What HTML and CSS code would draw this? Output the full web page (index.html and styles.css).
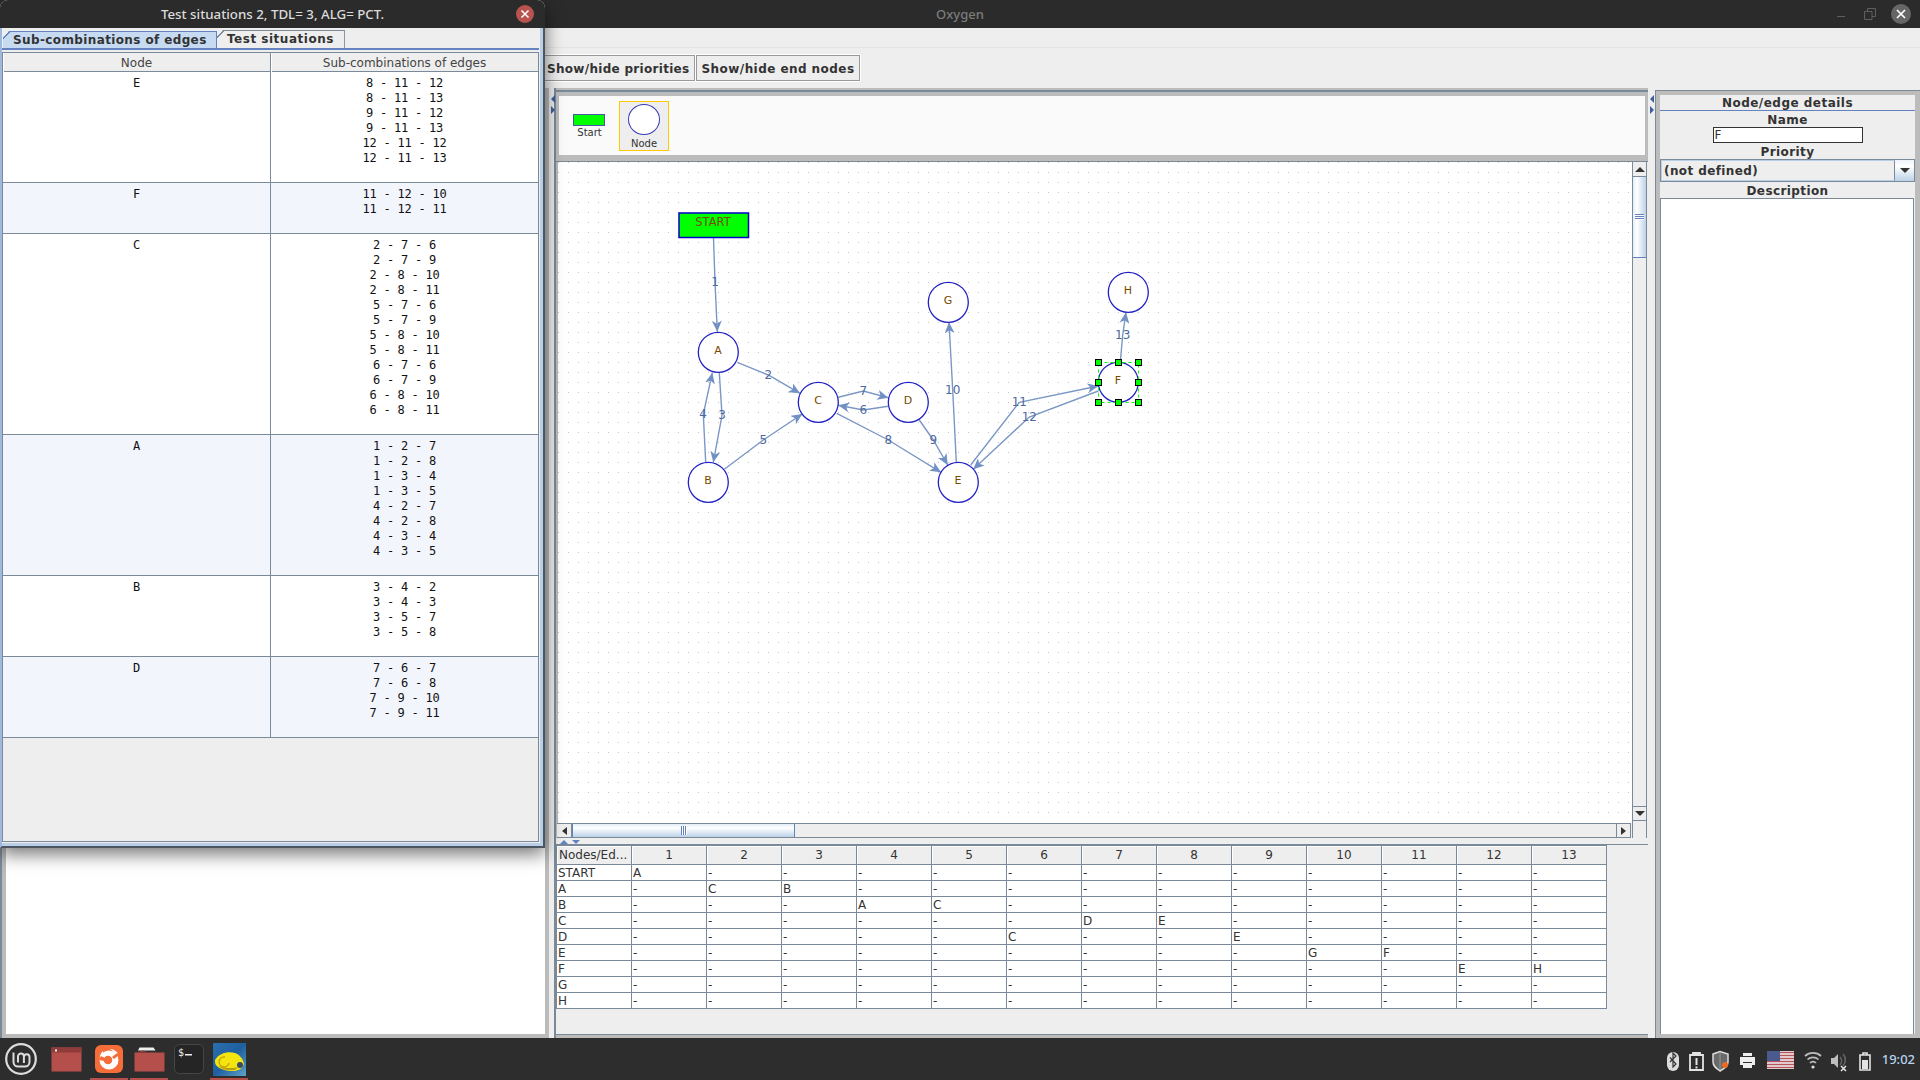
FILE: index.html
```html
<!DOCTYPE html>
<html lang="en">
<head>
<meta charset="utf-8">
<title>Oxygen</title>
<link rel="stylesheet" href="styles.css">
</head>
<body>
<div class="desktop">
  <header class="app-title">
    <span class="app-name">Oxygen</span>
    <div class="win-controls">
      <svg class="win-min" width="10" height="10" viewBox="0 0 10 10"><path d="M1 7.5h8" stroke="#5f5f5f" stroke-width="1"/></svg>
      <svg class="win-max" width="12" height="12" viewBox="0 0 12 12"><path d="M.5 3.5h7.500v8h-7.500zM3.500 3.500v-3h8v8h-3.500" fill="none" stroke="#5f5f5f"/></svg>
      <span class="win-close"><svg width="10" height="10" viewBox="0 0 10 10"><path d="M1 1l8 8M9 1l-8 8" stroke="#fff" stroke-width="1.700"/></svg></span>
    </div>
  </header>

  <div class="toolbar">
    <button class="tool-btn tool-first">Show/hide priorities</button>
    <button class="tool-btn tool-second">Show/hide end nodes</button>
  </div>

  <main class="workspace">
    <section class="left-pane"><div class="left-white"></div></section>
    <div class="split-left"><i class="arrow-l"></i><i class="arrow-r"></i></div>

    <section class="center-pane">
      <div class="palette-frame">
        <div class="palette">
          <div class="pal-start"><span class="pal-swatch"></span><span class="pal-label">Start</span></div>
          <div class="pal-node"><span class="pal-circle"></span><span class="pal-label">Node</span></div>
        </div>
      </div>

      <div class="canvas-row">
        <div class="canvas-col">
          <div class="canvas">
            <svg class="graph" width="1074" height="660" viewBox="558 162 1074 660">
              <defs>
                <pattern id="dots" x="558" y="162" width="10" height="10" patternUnits="userSpaceOnUse"><rect width="1" height="1" fill="#c6c6c6"/></pattern>
                <marker id="arrow" markerUnits="userSpaceOnUse" markerWidth="12" markerHeight="10" refX="11" refY="5" orient="auto"><path d="M0 0L11 5L0 10L3 5z" fill="#7191c4"/></marker>
              </defs>
              <rect x="558" y="162" width="1074" height="660" fill="url(#dots)"/>
              <g class="edges">
                <polyline points="713.500,238 715,282 717.300,331.700" marker-end="url(#arrow)"/>
                <polyline points="737.300,362.300 768.300,375 800,393.300" marker-end="url(#arrow)"/>
                <polyline points="719.300,372.700 722,415.300 713.300,462.300" marker-end="url(#arrow)"/>
                <polyline points="705.700,462.300 703.300,414.300 712.300,372.700" marker-end="url(#arrow)"/>
                <polyline points="724.300,469.300 763.300,440 802.300,414" marker-end="url(#arrow)"/>
                <polyline points="888.300,406.300 863.300,410 838.300,405.300" marker-end="url(#arrow)"/>
                <polyline points="838.300,397.300 863.300,391 888.300,397.700" marker-end="url(#arrow)"/>
                <polyline points="836.700,413.300 888.300,440 941,472.300" marker-end="url(#arrow)"/>
                <polyline points="919.300,420 933.300,440 947.700,465" marker-end="url(#arrow)"/>
                <polyline points="956.300,462.300 952.700,390 949,322.300" marker-end="url(#arrow)"/>
                <polyline points="970.700,465 1019.300,402.300 1098.300,386" marker-end="url(#arrow)"/>
                <polyline points="1098.300,391 1029.300,417 973.300,469.300" marker-end="url(#arrow)"/>
                <polyline points="1120.300,362.300 1122.700,335 1126,312.300" marker-end="url(#arrow)"/>
              </g>
              <g class="edge-labels">
                <text x="715" y="286">1</text><text x="768.300" y="379">2</text><text x="722" y="419">3</text>
                <text x="703" y="418">4</text><text x="763.300" y="444">5</text><text x="863.300" y="414">6</text>
                <text x="863.300" y="395">7</text><text x="888.300" y="444">8</text><text x="933.300" y="444">9</text>
                <text x="952.700" y="394">10</text><text x="1019.300" y="406">11</text><text x="1029.300" y="421">12</text>
                <text x="1122.700" y="339">13</text>
              </g>
              <rect class="start-box" x="679" y="213" width="69.500" height="24.500"/>
              <text class="node-text" x="713" y="226">START</text>
              <g class="nodes">
                <circle cx="718.300" cy="352.300" r="20"/><circle cx="708.300" cy="482.300" r="20"/>
                <circle cx="818.300" cy="402.300" r="20"/><circle cx="908.300" cy="402.300" r="20"/>
                <circle cx="958.300" cy="482.300" r="20"/><circle cx="1118.300" cy="382.300" r="20"/>
                <circle cx="948.300" cy="302.300" r="20"/><circle cx="1128.300" cy="292.300" r="20"/>
              </g>
              <g class="node-labels">
                <text x="718" y="354">A</text><text x="708" y="484">B</text><text x="818" y="404">C</text><text x="908" y="404">D</text>
                <text x="958" y="484">E</text><text x="1118" y="384">F</text><text x="948" y="304">G</text><text x="1128" y="294">H</text>
              </g>
              <rect class="sel-box" x="1098.500" y="362.500" width="40" height="40"/>
              <g class="handles">
                <rect x="1095.500" y="359.500" width="6" height="6"/><rect x="1115.500" y="359.500" width="6" height="6"/><rect x="1135.500" y="359.500" width="6" height="6"/>
                <rect x="1095.500" y="379.500" width="6" height="6"/><rect x="1135.500" y="379.500" width="6" height="6"/>
                <rect x="1095.500" y="399.500" width="6" height="6"/><rect x="1115.500" y="399.500" width="6" height="6"/><rect x="1135.500" y="399.500" width="6" height="6"/>
              </g>
            </svg>
          </div>
          <div class="hscroll">
            <span class="sb-btn"><i class="tri tri-left"></i></span>
            <span class="hthumb"><i class="grip-v"></i></span>
            <span class="htrack"></span>
            <span class="sb-btn sb-right"><i class="tri tri-right"></i></span>
          </div>
        </div>
        <div class="vscroll">
          <span class="sb-btn-v"><i class="tri tri-up"></i></span>
          <span class="vthumb"><i class="grip-h"></i></span>
          <span class="vtrack"></span>
          <span class="sb-btn-v"><i class="tri tri-down"></i></span>
          <span class="sb-corner"></span>
        </div>
      </div>

      <div class="divider-h"><i class="mini-up"></i><i class="mini-down"></i></div>

      <div class="matrix-wrap">
        <table class="matrix">
          <thead>
            <tr><th class="first">Nodes/Ed...</th><th>1</th><th>2</th><th>3</th><th>4</th><th>5</th><th>6</th><th>7</th><th>8</th><th>9</th><th>10</th><th>11</th><th>12</th><th>13</th></tr>
          </thead>
          <tbody>
            <tr><td>START</td><td>A</td><td>-</td><td>-</td><td>-</td><td>-</td><td>-</td><td>-</td><td>-</td><td>-</td><td>-</td><td>-</td><td>-</td><td>-</td></tr>
            <tr><td>A</td><td>-</td><td>C</td><td>B</td><td>-</td><td>-</td><td>-</td><td>-</td><td>-</td><td>-</td><td>-</td><td>-</td><td>-</td><td>-</td></tr>
            <tr><td>B</td><td>-</td><td>-</td><td>-</td><td>A</td><td>C</td><td>-</td><td>-</td><td>-</td><td>-</td><td>-</td><td>-</td><td>-</td><td>-</td></tr>
            <tr><td>C</td><td>-</td><td>-</td><td>-</td><td>-</td><td>-</td><td>-</td><td>D</td><td>E</td><td>-</td><td>-</td><td>-</td><td>-</td><td>-</td></tr>
            <tr><td>D</td><td>-</td><td>-</td><td>-</td><td>-</td><td>-</td><td>C</td><td>-</td><td>-</td><td>E</td><td>-</td><td>-</td><td>-</td><td>-</td></tr>
            <tr><td>E</td><td>-</td><td>-</td><td>-</td><td>-</td><td>-</td><td>-</td><td>-</td><td>-</td><td>-</td><td>G</td><td>F</td><td>-</td><td>-</td></tr>
            <tr><td>F</td><td>-</td><td>-</td><td>-</td><td>-</td><td>-</td><td>-</td><td>-</td><td>-</td><td>-</td><td>-</td><td>-</td><td>E</td><td>H</td></tr>
            <tr><td>G</td><td>-</td><td>-</td><td>-</td><td>-</td><td>-</td><td>-</td><td>-</td><td>-</td><td>-</td><td>-</td><td>-</td><td>-</td><td>-</td></tr>
            <tr><td>H</td><td>-</td><td>-</td><td>-</td><td>-</td><td>-</td><td>-</td><td>-</td><td>-</td><td>-</td><td>-</td><td>-</td><td>-</td><td>-</td></tr>
          </tbody>
        </table>
      </div>
    </section>

    <div class="split-right"><i class="arrow-l"></i><i class="arrow-r"></i></div>

    <aside class="details">
      <div class="details-inner">
        <div class="details-title">Node/edge details</div>
        <div class="field-label name-label">Name</div>
        <div class="name-row"><span class="name-input">F</span></div>
        <div class="field-label prio-label">Priority</div>
        <div class="combo"><span class="combo-value">(not defined)</span><span class="combo-btn"><i class="tri tri-down"></i></span></div>
        <div class="field-label desc-label">Description</div>
        <div class="desc-box"></div>
      </div>
    </aside>
  </main>

  <footer class="taskbar">
    <div class="task-left">
      <span class="menu-slot">
        <svg width="32" height="32" viewBox="0 0 32 32"><circle cx="16" cy="16" r="14.800" fill="none" stroke="#dcdcdc" stroke-width="2.200"/><path d="M8.500 9.500v9.500a4.500 4.500 0 0 0 4.500 4.500h7a4.500 4.500 0 0 0 4.500-4.500v-5a2.800 2.800 0 0 0-5.600 0v6M13 19.500v-6a2.900 2.900 0 0 1 5.900 0" fill="none" stroke="#dcdcdc" stroke-width="2"/></svg>
      </span>
      <span class="task-slot first-app">
        <svg width="31" height="25" viewBox="0 0 31 25"><rect width="30" height="24" x=".5" y=".5" fill="#b44f4c"/><rect width="30" height="5" x=".5" y=".5" fill="#8f3b39"/><rect x="4" y="2.500" width="2" height="2" fill="#f3f3f3"/></svg>
      </span>
      <span class="task-slot active">
        <svg width="28" height="28" viewBox="0 0 28 28"><rect width="28" height="28" rx="6" fill="#f56d38"/><circle cx="14" cy="15" r="9.500" fill="#fff"/><circle cx="13" cy="15" r="4.300" fill="#f56d38"/><path d="M5 14c-.5-3 .5-6 3-8 0 2 .5 3 1.500 4 1-1.500 3-2.500 5-2.500l-3 3z" fill="#fff"/><path d="M15 4c3 0 6 1.500 8 4.500l-2 1.500c-1-2.500-3.500-4.500-6-6z" fill="#fff"/><path d="M4 15l5 1 1-3-4-2z" fill="#f56d38"/><path d="M17 12l5-4 2 2-5 4z" fill="#f56d38"/></svg>
      </span>
      <span class="task-slot active">
        <svg width="31" height="25" viewBox="0 0 31 25"><path d="M4 3.500l1.500-3h14l2 3z" fill="#efefef"/><path d="M.5 5.500h30v19h-30z" fill="#b44f4c"/><path d="M.5 5.500l9-2 4 2z" fill="#8f3b39"/></svg>
      </span>
      <span class="task-slot">
        <svg width="30" height="30" viewBox="0 0 30 30"><rect x=".5" y=".5" width="29" height="29" rx="5" fill="#252525" stroke="#464646"/><text class="term-text" x="4" y="12">$</text><rect x="11" y="10" width="7" height="1.500" fill="#eee"/></svg>
      </span>
      <span class="task-slot active">
        <svg width="33" height="33" viewBox="0 0 33 33"><defs><linearGradient id="sea" x1="0" y1="0" x2="1" y2="1"><stop offset="0" stop-color="#2a6fae"/><stop offset=".5" stop-color="#1f5fa0"/><stop offset="1" stop-color="#5fa3c9"/></linearGradient></defs><rect width="33" height="33" fill="url(#sea)"/><path d="M2 17c4-7 13-9 20-7 5 2 8 6 9 11-2 5-6 7-11 7-7 0-14-2-17-6-1-1-1-3-1-5z" fill="#f4e40f"/><path d="M5 23c5 4 11 5 17 4l3-3c-6 2-14 1-20-1z" fill="#b8a010"/><circle cx="27" cy="22" r="3" fill="#3d4a66"/><path d="M12 14a5 5 0 1 0 4 6" fill="none" stroke="#c4aa10" stroke-width="1.500"/></svg>
      </span>
    </div>
    <div class="task-right">
      <svg class="tray" width="214" height="42" viewBox="1660 1038 214 42">
        <rect x="1666" y="1052" width="12" height="19" rx="6" fill="#dcdcdc"/>
        <path d="M1669 1057.500l6 6.500-3 3v-14l3 3-6 6" fill="none" stroke="#333" stroke-width="1.200"/>
        <path d="M1689 1055h13v15h-13zM1692 1055v-2h7v2" fill="none" stroke="#e4e4e4" stroke-width="1.800"/>
        <path d="M1695.500 1058v7M1695.500 1066.500v2" stroke="#e4e4e4" stroke-width="2"/>
        <path d="M1712 1054l7-2.500 8 2.500v8c0 4-3 6-8 9-4-3-7-5-7-9z" fill="#6a6a6a" stroke="#ddd" stroke-width="1.500"/>
        <path d="M1719 1052v18" stroke="#999"/>
        <circle cx="1724" cy="1065" r="3" fill="#ec6b23"/>
        <path d="M1742 1053h9v3h-9z" fill="#eee"/><path d="M1739 1057h15v8h-3v-3h-9v3h-3z" fill="#eee"/><path d="M1742 1063h9v5h-9z" fill="#eee"/>
        <rect x="1766" y="1051" width="27" height="18" fill="#f1f1f1"/>
        <path d="M1766 1052.500h27M1766 1055.500h27M1766 1058.500h27M1766 1061.500h27M1766 1064.500h27M1766 1067.500h27" stroke="#b8545b" stroke-width="1.500"/>
        <rect x="1766" y="1051" width="13" height="10" fill="#4a5a8c"/>
        <path d="M1804 1056a12 12 0 0 1 16 0M1806.500 1059.500a8 8 0 0 1 11 0M1809 1063a4 4 0 0 1 6 0" fill="none" stroke="#bdbdbd" stroke-width="1.700"/>
        <circle cx="1812" cy="1067" r="1.600" fill="#dedede"/>
        <path d="M1830 1058h3l4-4v14l-4-4h-3z" fill="#bdbdbd"/><path d="M1839 1057a6 6 0 0 1 0 8M1842 1054a9 9 0 0 1 0 12" fill="none" stroke="#666" stroke-width="1.500"/>
        <path d="M1840 1066l5 5M1845 1066l-5 5" stroke="#e4e4e4" stroke-width="1.500"/>
        <path d="M1859 1055h10v15h-10zM1862 1055v-2h4v2" fill="none" stroke="#e4e4e4" stroke-width="1.600"/>
        <rect x="1861" y="1060" width="6" height="9" fill="#e4e4e4"/>
      </svg>
      <span class="clock">19:02</span>
    </div>
  </footer>

  <section class="dialog">
    <header class="dlg-title">
      <span class="dlg-name">Test situations 2, TDL= 3, ALG= PCT.</span>
      <span class="dlg-close"><svg width="10" height="10" viewBox="0 0 10 10"><path d="M1.500 1.500l7 7M8.500 1.500l-7 7" stroke="#fff" stroke-width="1.500"/></svg></span>
    </header>
    <div class="dlg-body">
      <div class="tabs">
        <span class="tab tab-on">Sub-combinations of edges</span>
        <span class="tab">Test situations</span>
      </div>
      <div class="tab-panel">
        <div class="sub-head"><span>Node</span><span>Sub-combinations of edges</span></div>
        <div class="sub-row"><div>E</div><div>8 - 11 - 12<br>8 - 11 - 13<br>9 - 11 - 12<br>9 - 11 - 13<br>12 - 11 - 12<br>12 - 11 - 13</div></div>
        <div class="sub-row alt"><div>F</div><div>11 - 12 - 10<br>11 - 12 - 11</div></div>
        <div class="sub-row"><div>C</div><div>2 - 7 - 6<br>2 - 7 - 9<br>2 - 8 - 10<br>2 - 8 - 11<br>5 - 7 - 6<br>5 - 7 - 9<br>5 - 8 - 10<br>5 - 8 - 11<br>6 - 7 - 6<br>6 - 7 - 9<br>6 - 8 - 10<br>6 - 8 - 11</div></div>
        <div class="sub-row alt"><div>A</div><div>1 - 2 - 7<br>1 - 2 - 8<br>1 - 3 - 4<br>1 - 3 - 5<br>4 - 2 - 7<br>4 - 2 - 8<br>4 - 3 - 4<br>4 - 3 - 5</div></div>
        <div class="sub-row"><div>B</div><div>3 - 4 - 2<br>3 - 4 - 3<br>3 - 5 - 7<br>3 - 5 - 8</div></div>
        <div class="sub-row alt"><div>D</div><div>7 - 6 - 7<br>7 - 6 - 8<br>7 - 9 - 10<br>7 - 9 - 11</div></div>
      </div>
    </div>
  </section>
</div>
</body>
</html>
```

FILE: styles.css
```css
* { box-sizing: border-box; }
html, body { margin: 0; padding: 0; }
body { width: 1920px; height: 1080px; overflow: hidden; background: #eee; font-family: "DejaVu Sans", sans-serif; font-size: 12px; color: #333; }
.desktop { position: relative; width: 1920px; height: 1080px; display: flex; flex-direction: column; }

/* main window title */
.app-title { height: 28px; background: #2b2b2b; display: flex; align-items: center; justify-content: center; position: relative; flex: none; }
.app-name { font-family: "Noto Sans", sans-serif; font-size: 13px; color: #7b7b7b; font-weight: 500; }
.win-controls { position: absolute; right: 9px; top: 0; height: 28px; display: flex; align-items: center; gap: 18px; }
.win-close { width: 20px; height: 20px; border-radius: 50%; background: #666; display: flex; align-items: center; justify-content: center; margin-left: -3px; }
.win-min, .win-max { display: block; }

/* toolbar */
.toolbar { height: 60px; flex: none; display: flex; align-items: flex-start; gap: 1px; padding: 27px 0 0 544px; background: linear-gradient(#eee 0, #eee 19px, #e4e4e4 19px, #e4e4e4 20px, #eee 20px); }
.tool-btn { height: 26px; margin: 0; padding: 1px 0 0; border: 1px solid #999; outline: 1px solid #fff; outline-offset: 0; background: #eee; font: bold 12px "DejaVu Sans", sans-serif; color: #333; white-space: nowrap; }
.tool-first { width: 151px; border-left: none; padding-left: 3px; text-align: left; letter-spacing: .3px; }
.tool-second { width: 164px; letter-spacing: .44px; }

/* workspace */
.workspace { flex: 1; min-height: 0; display: flex; }
.left-pane { width: 549px; flex: none; padding: 0 4px 4px 4px; background: #bbb; border-left: 2px solid #7a8a99; }
.left-white { height: 100%; background: #fff; }
.split-left { width: 5px; flex: none; background: #eee; position: relative; }
.center-pane { width: 1094px; flex: none; display: flex; flex-direction: column; padding-top: 2px; border-left: 2px solid #7a8a99; background: #bcbcbc; }
.palette-frame { height: 72px; flex: none; padding: 4px 4px 6px 3px; background: #bcbcbc; border-top: 2px solid #7a8a99; width: 1092px; border-bottom: 1px solid #7a8a99; }
.palette { height: 100%; width: 1086px; background: #fafafa; display: flex; align-items: flex-start; }
.pal-start { width: 45px; margin-left: 14px; margin-top: 18px; display: flex; flex-direction: column; align-items: center; }
.pal-swatch { width: 32px; height: 12px; background: #00ff00; border: 1px solid #4a56a8; margin-left: -14px; }
.pal-label { font-size: 10px; color: #333; line-height: 12px; }
.pal-start .pal-label { margin-top: 1px; margin-left: -12px; }
.pal-node { width: 50px; height: 50px; margin-left: 1px; margin-top: 5px; border: 1px solid #ffc800; background: #eee; display: flex; flex-direction: column; align-items: center; padding-top: 2px; }
.pal-circle { width: 32px; height: 32px; border-radius: 50%; background: #fff; border: 1.500px solid #3b3bb8; }
.pal-node .pal-label { margin-top: 3px; }

.canvas-row { flex: none; height: 676px; display: flex; background: #eee; }
.canvas-col { width: 1076px; flex: none; border-left: 2px solid #bbb; }
.canvas { height: 661px; background: #fff; overflow: hidden; }
.graph { display: block; }
.edges polyline { fill: none; stroke: #7b97c6; stroke-width: 1.400; }
.edge-labels text { font-size: 12px; fill: #4e6a9c; text-anchor: middle; }
.start-box { fill: #00ff00; stroke: #0000c8; stroke-width: 1.500; }
.node-text { font-size: 11.500px; fill: #7a4a00; text-anchor: middle; }
.nodes circle { fill: #fff; stroke: #2222c4; stroke-width: 1.300; }
.node-labels text { font-size: 11px; fill: #7a4a00; text-anchor: middle; }
.sel-box { fill: none; stroke: #00ff00; stroke-dasharray: 3 3; }
.handles rect { fill: #00ff00; stroke: #000; stroke-width: 1; }

.hscroll { height: 15px; display: flex; border-top: 1px solid #7a8a99; background: #eee; border-bottom: 1px solid #7a8a99; margin-left: -1px; margin-right: 1px; }
.sb-btn { width: 15px; flex: none; background: #eee; display: flex; align-items: center; justify-content: center; border-right: 1px solid #7a8a99; }
.sb-right { border-left: 1px solid #7a8a99; border-right: 1px solid #7a8a99; }
.hthumb { width: 223px; flex: none; border: 1px solid #6382bf; border-width: 0 1px; background: linear-gradient(#e2edf8, #fff 30%, #bcd2e8); display: flex; align-items: center; justify-content: center; }
.htrack { flex: 1; }
.vscroll { width: 15px; flex: none; display: flex; flex-direction: column; border: 1px solid #7a8a99; border-width: 0 1px; background: #eee; }
.sb-btn-v { height: 15px; flex: none; display: flex; align-items: center; justify-content: center; border-bottom: 1px solid #7a8a99; border-top: 0; }
.vscroll .sb-btn-v:nth-of-type(4) { border-top: 1px solid #7a8a99; }
.vthumb { height: 81px; flex: none; background: linear-gradient(90deg, #e2edf8, #fff 30%, #bcd2e8); border-bottom: 1px solid #6382bf; display: flex; align-items: center; justify-content: center; }
.vtrack { flex: 1; }
.sb-corner { height: 17px; flex: none; }
.tri { display: block; width: 0; height: 0; border-style: solid; }
.tri-left { border-width: 4px 5px 4px 0; border-color: transparent #333 transparent transparent; }
.tri-right { border-width: 4px 0 4px 5px; border-color: transparent transparent transparent #333; }
.tri-up { border-width: 0 5px 5px; border-color: transparent transparent #333; }
.tri-down { border-width: 5px 5px 0; border-color: #333 transparent transparent; }
.grip-v { display: block; width: 6px; height: 9px; background: repeating-linear-gradient(90deg, #6382bf 0 1px, #fff 1px 2px); }
.grip-h { display: block; width: 9px; height: 6px; background: repeating-linear-gradient(#6382bf 0 1px, #fff 1px 2px); }

.divider-h { height: 7px; flex: none; background: #eee; border-bottom: 1px solid #7a8a99; padding-left: 4px; display: flex; align-items: flex-end; gap: 4px; overflow: hidden; }
.mini-up { display: block; width: 0; height: 0; border-style: solid; border-width: 0 4px 4px; border-color: transparent transparent #6382bf; }
.mini-down { display: block; width: 0; height: 0; border-style: solid; border-width: 4px 4px 0; border-color: #6382bf transparent transparent; }

.matrix-wrap { height: 190px; flex: none; border-bottom: 1px solid #7a8a99; background: #eee; }
.matrix { border-collapse: collapse; table-layout: fixed; width: 1051px; background: #fff; }
.matrix th, .matrix td { width: 75px; border: 1px solid #7a8a99; padding: 0; font-weight: normal; font-size: 12px; overflow: hidden; white-space: nowrap; }
.matrix th { height: 19px; background: #eee; color: #333; text-align: center; box-shadow: inset 1px 1px 0 #fff; }
.matrix th.first { text-align: left; padding-left: 2px; }
.matrix td { height: 16px; line-height: 14px; color: #333; padding-left: 1px; background: #fff; }

.split-right { width: 7px; flex: none; position: relative; background: #eee; }
.arrow-l { position: absolute; left: 2px; top: 7px; width: 0; height: 0; border-style: solid; border-width: 4px 4px 4px 0; border-color: transparent #3d5f9e transparent transparent; }
.arrow-r { position: absolute; left: 2px; top: 18px; width: 0; height: 0; border-style: solid; border-width: 4px 0 4px 4px; border-color: transparent transparent transparent #3d5f9e; }

.details { flex: 1; min-width: 0; margin-top: 2px; padding: 4px 5px 4px 4px; background: #bcbcbc; border-left: 1px solid #7a8a99; border-top: 1px solid #7a8a99; }
.details-inner { height: 100%; background: #eee; display: flex; flex-direction: column; }
.details-title { height: 16px; line-height: 16px; font-weight: bold; text-align: center; border-bottom: 1px solid #6382bf; letter-spacing: .48px; }
.field-label { height: 16px; line-height: 18px; font-weight: bold; text-align: center; letter-spacing: .4px; overflow: hidden; }
.name-row { display: flex; justify-content: center; height: 16px; }
.name-input { width: 150px; height: 16px; background: #fff; border: 1px solid #333; font-size: 12px; line-height: 15px; padding-left: 1px; color: #333; }
.combo { height: 23px; display: flex; border: 1px solid #7a8a99; background: #eee; }
.combo-value { flex: 1; font-weight: bold; line-height: 21px; padding-left: 2px; letter-spacing: .4px; border: 1px solid #b8cfe5; border-right-color: #7a8a99; }
.combo-btn { width: 19px; flex: none; display: flex; align-items: center; justify-content: center; background: linear-gradient(#eef4fa, #fff 30%, #bcd2e8); }
.desc-box { flex: 1; background: #fff; border-top: 1px solid #7a8a99; border-left: 1px solid #7a8a99; border-right: 1px solid #7a8a99; margin-right: 1px; }

/* taskbar */
.taskbar { height: 42px; flex: none; background: #2d2d2d; display: flex; justify-content: space-between; align-items: stretch; }
.task-left { display: flex; align-items: stretch; }
.menu-slot { width: 42px; display: flex; align-items: center; justify-content: center; margin-right: 4px; }
.task-slot { width: 40px; position: relative; display: flex; align-items: center; justify-content: center; }
.first-app { margin-right: 3px; }
.task-slot.active::after { content: ""; position: absolute; left: 1px; right: 1px; bottom: 0; height: 2px; background: #b44f4c; }
.term-text { font-family: "DejaVu Sans Mono", monospace; font-size: 10px; fill: #eee; }
.task-right { display: flex; align-items: center; gap: 7px; padding-right: 5px; }
.tray { display: block; }
.clock { font-family: "Noto Sans", sans-serif; font-size: 13px; font-weight: 500; color: #b6d3ef; }

/* dialog */
.dialog { position: absolute; left: 0; top: 0; width: 545px; height: 848px; border-radius: 8px 8px 0 0; box-shadow: 0 6px 18px rgba(0,0,0,.55); display: flex; flex-direction: column; background: #eee; }
.dlg-title { height: 28px; flex: none; background: #2b2b2b; border-radius: 8px 8px 0 0; display: flex; align-items: center; justify-content: center; position: relative; }
.dlg-name { font-family: "Noto Sans", sans-serif; font-size: 13.300px; font-weight: 500; color: #dcdcdc; }
.dlg-close { position: absolute; left: 516px; top: 5px; width: 18px; height: 18px; border-radius: 50%; background: #b85450; display: flex; align-items: center; justify-content: center; }
.dlg-body { flex: 1; min-height: 0; display: flex; flex-direction: column; background: #eee; border-left: 2px solid #9fb9de; border-right: 2px solid #4c5560; border-bottom: 2px solid #4c5560; padding-right: 4px; box-shadow: inset -3px -3px 0 #b8cfe5; }
.tabs { height: 22px; flex: none; display: flex; align-items: flex-end; border-bottom: 2px solid #6382bf; padding-left: 1px; }
.tab { height: 18px; line-height: 17px; padding: 0 10px; border: 1px solid #7a8a99; border-bottom: 0; border-left: 0; font-weight: bold; letter-spacing: .51px; color: #333; white-space: nowrap; clip-path: polygon(6px 0, 100% 0, 100% 100%, 0 100%, 0 6px); background: linear-gradient(135deg, transparent 4px, #7a8a99 4px, #7a8a99 5px, #eee 5px); }
.tab-on { width: 214px; height: 17px; padding: 0 0 0 10px; letter-spacing: .38px; border-color: #6382bf; background: linear-gradient(135deg, transparent 4px, #6382bf 4px, #6382bf 5px, #c6dbf2 5px); }
.tab-panel { flex: 1; min-height: 0; margin-top: 2px; margin-bottom: 4px; border: 1px solid #7a8a99; background: #eee; }
.sub-head { display: grid; grid-template-columns: 267px 268px; height: 19px; border-bottom: 1px solid #7a8a99; background: #eee; color: #444; text-align: center; line-height: 20px; }
.sub-head span { box-shadow: inset 1px 0 0 #fff; }
.sub-head span + span { border-left: 1px solid #7a8a99; }
.sub-row { display: grid; grid-template-columns: 267px 268px; background: #fff; border-bottom: 1px solid #7a8a99; font-family: "DejaVu Sans Mono", monospace; font-size: 12px; letter-spacing: -.22px; line-height: 15px; color: #111; text-align: center; }
.sub-row.alt { background: #f3f5fd; }
.sub-row > div { padding: 4px 0 16px; }
.sub-row > div + div { border-left: 1px solid #7a8a99; }
```
